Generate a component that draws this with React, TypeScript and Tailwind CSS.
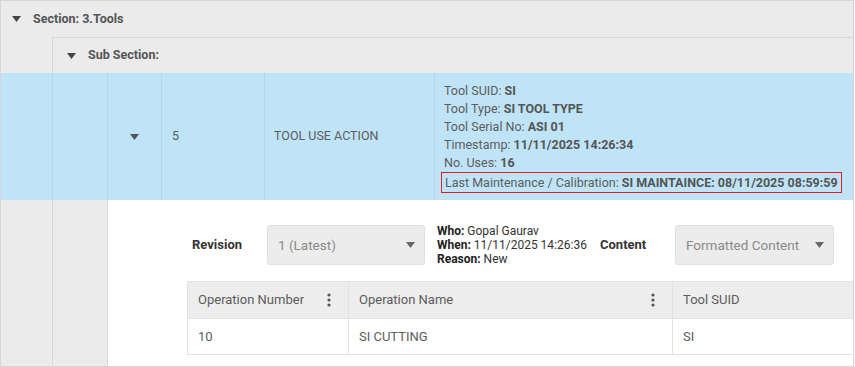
import React from "react";

const font = { fontFamily: 'Roboto, "Open Sans", Arial, sans-serif' };

function Caret({ className = "" }: { className?: string }) {
	return (
		<svg width="9" height="6" viewBox="0 0 9 6" className={className}>
			<path d="M0 0 L9 0 L4.5 6 Z" fill="currentColor" />
		</svg>
	);
}

function Dots() {
	return (
		<svg width="4" height="14" viewBox="0 0 4 14">
			<circle cx="2" cy="2" r="1.6" fill="#555" />
			<circle cx="2" cy="7" r="1.6" fill="#555" />
			<circle cx="2" cy="12" r="1.6" fill="#555" />
		</svg>
	);
}

function Select({ value, width }: { value: string; width: string }) {
	return (
		<div
			className={`${width} shrink-0 h-[40px] flex items-center justify-between pl-[10px] pr-[9px] bg-[#ececec] border border-[#e0e0e0] rounded-[3px] text-[#8a8a8a] text-[13.5px] whitespace-nowrap`}
		>
			<span>{value}</span>
			<Caret className="text-[#666]" />
		</div>
	);
}

const info: [string, string][] = [
	["Tool SUID: ", "SI"],
	["Tool Type: ", "SI TOOL TYPE"],
	["Tool Serial No: ", "ASI 01"],
	["Timestamp: ", "11/11/2025 14:26:34"],
	["No. Uses: ", "16"],
];

export default function App() {
	return (
		<div className="w-[855px] h-[367px] bg-white" style={font}>
			<div className="w-[854px] h-[367px] border border-[#d6d6d6] bg-[#ebebeb] overflow-hidden flex flex-col">
				{/* section header */}
				<div className="h-[36px] flex items-center pl-[11px] gap-[12px] text-[#555] text-[12.5px] font-bold shrink-0">
					<Caret className="text-[#444]" />
					<span>Section: 3.Tools</span>
				</div>
				{/* sub section header */}
				<div className="ml-[51px] h-[36px] border-l border-t border-[#d8d8d8] flex items-center pl-[14px] gap-[12px] text-[#555] text-[12.5px] font-bold shrink-0">
					<Caret className="text-[#444]" />
					<span>Sub Section:</span>
				</div>
				{/* selected row */}
				<div className="h-[127px] flex bg-[#c0e4f7] text-[#5c5c5c] text-[12.5px] shrink-0 whitespace-nowrap">
					<div className="w-[52px] shrink-0 border-r border-[#b5d5e8]" />
					<div className="w-[55px] shrink-0 border-r border-[#b5d5e8]" />
					<div className="w-[54px] shrink-0 border-r border-[#b5d5e8] flex items-center justify-center">
						<Caret className="text-[#555]" />
					</div>
					<div className="w-[103px] shrink-0 border-r border-[#b5d5e8] flex items-center pl-[10px]">5</div>
					<div className="w-[170px] shrink-0 border-r border-[#b5d5e8] flex items-center pl-[9px]">TOOL USE ACTION</div>
					<div className="flex-1 min-w-0 pl-[6px] pt-[9px] leading-[18px]">
						{info.map(([k, v]) => (
							<div key={k} className="pl-[3px]">
								{k}
								<b className="font-bold text-[#555]">{v}</b>
							</div>
						))}
						<div className="inline-block border border-[#e02020] pl-[3px] pr-[3px] leading-[19px]">
							Last Maintenance / Calibration: <b className="font-bold text-[#555]">SI MAINTAINCE: 08/11/2025 08:59:59</b>
						</div>
					</div>
				</div>
				{/* detail */}
				<div className="flex-1 flex">
					<div className="w-[52px] shrink-0 border-r border-[#d8d8d8]" />
					<div className="w-[55px] shrink-0 border-r border-[#d8d8d8]" />
					<div className="flex-1 min-w-0 bg-white pl-[79px] pt-[25px] whitespace-nowrap">
						<div className="flex items-center h-[40px]">
							<div className="w-[80px] shrink-0 pl-[5px] text-[13px] font-bold text-[#333]">Revision</div>
							<Select value="1 (Latest)" width="w-[158px]" />
							<div className="ml-[12px] shrink-0 text-[12px] leading-[14px] text-[#333] w-[163px]">
								<div><b className="text-[#222]">Who:</b> Gopal Gaurav</div>
								<div><b className="text-[#222]">When:</b> 11/11/2025 14:26:36</div>
								<div><b className="text-[#222]">Reason:</b> New</div>
							</div>
							<div className="w-[75px] shrink-0 text-[13px] font-bold text-[#333]">Content</div>
							<Select value="Formatted Content" width="w-[159px]" />
						</div>
						<div className="mt-[16px] border-l border-t border-[#e2e2e2] text-[13px] text-[#5c5c5c]">
							<div className="flex h-[37px] bg-[#ededed] border-b border-[#e2e2e2]">
								<div className="w-[161px] shrink-0 border-r border-[#e2e2e2] flex items-center justify-between pl-[10px] pr-[17px]">
									<span>Operation Number</span>
									<Dots />
								</div>
								<div className="w-[324px] shrink-0 border-r border-[#e2e2e2] flex items-center justify-between pl-[10px] pr-[17px]">
									<span>Operation Name</span>
									<Dots />
								</div>
								<div className="flex-1 flex items-center pl-[10px]">Tool SUID</div>
							</div>
							<div className="flex h-[36px] border-b border-[#e2e2e2]">
								<div className="w-[161px] shrink-0 border-r border-[#e2e2e2] flex items-center pl-[10px]">10</div>
								<div className="w-[324px] shrink-0 border-r border-[#e2e2e2] flex items-center pl-[10px]">SI CUTTING</div>
								<div className="flex-1 flex items-center pl-[10px]">SI</div>
							</div>
						</div>
					</div>
				</div>
			</div>
		</div>
	);
}
